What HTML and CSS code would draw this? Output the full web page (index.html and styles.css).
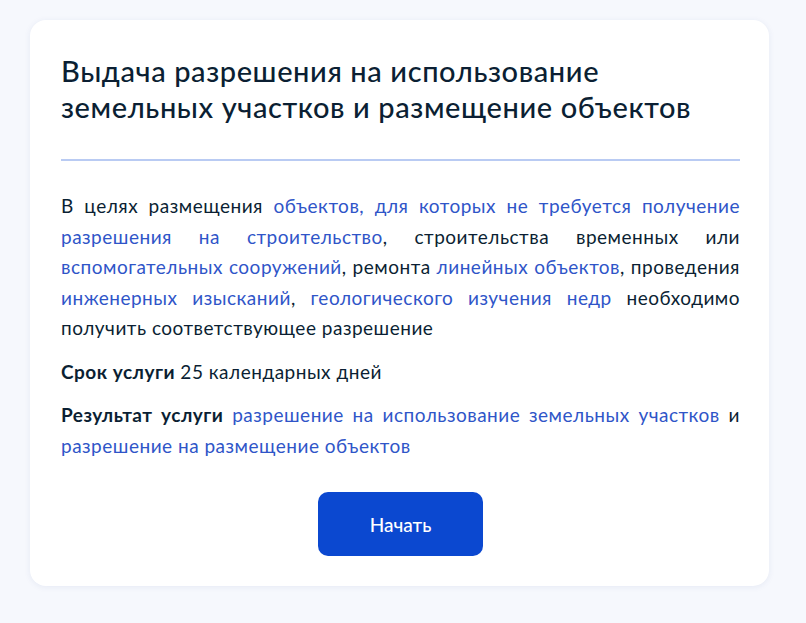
FILE: index.html
```html
<!DOCTYPE html>
<html lang="ru">
<head>
    <meta charset="UTF-8">
    <meta name="viewport" content="width=device-width, initial-scale=1.0">
    <title>Выдача разрешения</title>
    <link rel="stylesheet" href="styles.css">
</head>
<body>
    <div class="card">
        <h1 class="title">Выдача разрешения на использование земельных участков и размещение объектов</h1>
        <div class="divider"></div>
        <p class="text">
            В целях размещения <a href="#">объектов, для которых не требуется получение разрешения на строительство</a>, строительства временных или <a href="#">вспомогательных сооружений</a>, ремонта <a href="#">линейных объектов</a>, проведения <a href="#">инженерных изысканий</a>, <a href="#">геологического изучения недр</a> необходимо получить соответствующее разрешение
        </p>
        <p class="text info"><b>Срок услуги</b> 25 календарных дней</p>
        <p class="text info"><b>Результат услуги</b> <a href="#">разрешение на использование земельных участков</a> и <a href="#">разрешение на размещение объектов</a></p>
        <div class="actions">
            <button class="start-button">Начать</button>
        </div>
    </div>
</body>
</html>
```

FILE: styles.css
```css
body {
    font-family: Lato, "Noto Sans", sans-serif;
    margin: 0;
    padding: 20px 37px 37px 30px;
    background-color: #f6f8fd;
    color: #0b1f33;
}
.card {
    background-color: #fff;
    border-radius: 16px;
    box-shadow: 0 1px 6px rgba(40, 70, 140, 0.08);
    padding: 33px 29px 30px 31px;
}
.title {
    margin: 0;
    font-size: 29px;
    letter-spacing: 0.6px;
    line-height: 36px;
    font-weight: 500;
    max-width: 640px;
}
.divider {
    height: 2px;
    background-color: #b9cbf3;
    margin: 34px 0 30px;
}
.text {
    margin: 0;
    font-size: 19px;
    letter-spacing: 0.5px;
    line-height: 30.5px;
    text-align: justify;
}
.text a {
    color: #2f55c8;
    text-decoration: none;
}
.text b {
    font-weight: 700;
}
.info {
    margin-top: 13px;
}
.actions {
    display: flex;
    justify-content: center;
    margin-top: 31px;
}
.start-button {
    width: 165px;
    height: 64px;
    border: none;
    border-radius: 10px;
    background-color: #0b48d0;
    color: #fff;
    font-family: Lato, "Noto Sans", sans-serif;
    font-size: 19px;
    font-weight: 500;
    cursor: pointer;
}
```
